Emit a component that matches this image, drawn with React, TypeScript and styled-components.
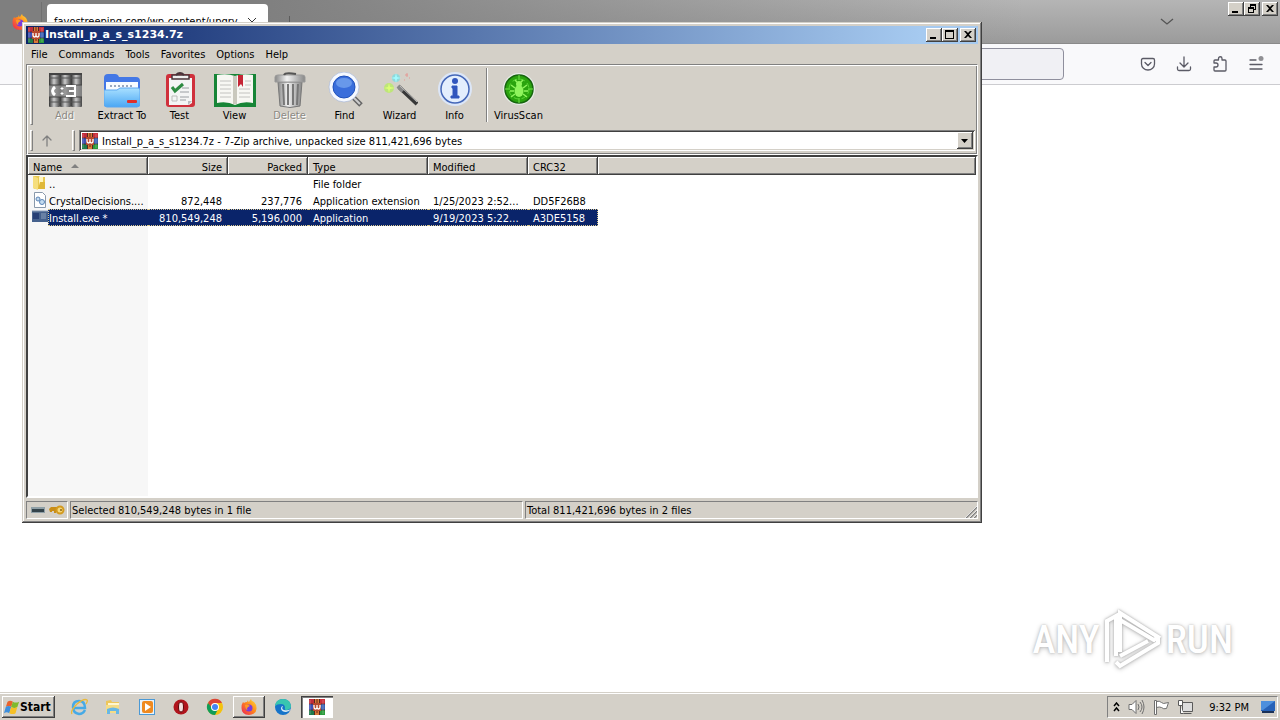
import React from "react";
import styled, { createGlobalStyle, css } from "styled-components";

const FACE = "#d4d0c8";
const SHADOW = "#808080";
const DARK = "#404040";
const NAVY = "#0a246a";

const Global = createGlobalStyle`
  * { box-sizing: border-box; }
  body { margin: 0; background: #fff; color: #000; font: 11px/14px "DejaVu Sans Condensed", "DejaVu Sans", sans-serif; }
  button, input, select { font: inherit; color: inherit; margin: 0; padding: 0; }
`;

const raised = css`
  box-shadow: inset -1px -1px ${DARK}, inset 1px 1px #fff, inset -2px -2px ${SHADOW};
`;

const Desktop = styled.div`
  position: relative;
  display: flex;
  flex-direction: column;
  min-height: 100vh;
`;

/* Browser */
const TabStrip = styled.header`
  display: flex;
  align-items: flex-start;
  height: 44px;
  padding: 2px 2px 0 12px;
  border-bottom: 1px solid #8a8a8a;
  background: linear-gradient(to right, #7f7f7f 20%, #7f7f7f00 80%), linear-gradient(#b5b5b5, #9b9b9b);
`;
const BrowserMark = styled.div`
  width: 30px;
  padding-top: 12px;
  height: 42px;
  border-right: 1px solid #707070;
`;
const BrowserTab = styled.div`
  display: flex;
  justify-content: space-between;
  align-items: center;
  width: 221px;
  height: 36px;
  margin: 2px 0 0 5px;
  padding: 0 10px 0 7px;
  border-radius: 4px;
  background: #fff;
`;
const TabClose = styled.button`
  display: flex;
  border: 0;
  background: none;
`;
const TabDivider = styled.span`
  width: 1px;
  height: 16px;
  margin: 14px 0 0 21px;
  background: #5c5c5c;
`;
const AllTabs = styled.button`
  display: flex;
  margin: 13px 54px 0 auto;
  border: 0;
  background: none;
`;
const NavBar = styled.nav`
  display: flex;
  align-items: center;
  height: 41px;
  padding: 0 6px 0 12px;
  border-bottom: 1px solid #ccccd0;
  background: #f9f9fb;
`;
const NavButton = styled.button`
  display: flex;
  align-items: center;
  justify-content: center;
  width: 36px;
  height: 32px;
  border: 0;
  background: none;
`;
const UrlBox = styled.input`
  flex: 1;
  min-width: 0;
  height: 32px;
  margin: 0 66px 0 110px;
  border: 1px solid #8f8f9d;
  border-radius: 4px;
  background: #f0f0f4;
`;
const PageArea = styled.main`
  position: relative;
  flex: 1;
  background: #fff;
`;

/* Window controls */
const Controls = styled.div`
  display: flex;
`;
const Control = styled.button<{ $apart?: boolean }>`
  display: flex;
  width: 16px;
  height: 14px;
  margin-left: ${(p) => (p.$apart ? "2px" : "0")};
  border: 0;
  background: ${FACE};
  ${raised}
`;

/* Archive window */
const Window = styled.section`
  position: absolute;
  top: 22px;
  left: 22px;
  width: 75%;
  padding: 4px;
  background: ${FACE};
  box-shadow: inset -1px -1px ${DARK}, inset 1px 1px ${FACE}, inset -2px -2px ${SHADOW}, inset 2px 2px #fff;
`;
const TitleBar = styled.div`
  display: flex;
  align-items: center;
  height: 18px;
  padding: 0 2px;
  color: #fff;
  background: linear-gradient(to right, ${NAVY}, #a6caf0 94%);
`;
const Title = styled.h1`
  flex: 1;
  margin: 0 0 0 1px;
  font: bold 11px/14px "DejaVu Sans", sans-serif;
`;
const MenuBar = styled.div`
  display: flex;
  gap: 11px;
  height: 20px;
  padding: 1px 0 0 5px;
`;
const MenuItem = styled.button`
  border: 0;
  background: none;
  white-space: nowrap;
`;
const Bands = styled.div`
  border: 1px solid ${SHADOW};
  border-bottom-color: #fff;
  border-right-color: #fff;
  box-shadow: inset 1px 1px #fff, inset -1px -1px ${SHADOW};
  padding: 1px;
`;
const Toolbar = styled.div`
  display: flex;
  align-items: flex-start;
  height: 61px;
  padding: 2px;
`;
const Grip = styled.span`
  flex: none;
  width: 3px;
  align-self: stretch;
  border: 1px solid #fff;
  border-right-color: ${SHADOW};
  border-bottom-color: ${SHADOW};
`;
const ToolList = styled.div`
  display: flex;
  padding-left: 4px;
`;
const Tool = styled.button<{ $wide?: boolean }>`
  display: flex;
  flex-direction: column;
  align-items: center;
  width: ${(p) => (p.$wide ? "60px" : "55px")};
  padding: 4px 0 0;
  border: 0;
  background: none;
  line-height: 14px;
  white-space: nowrap;
  &:disabled { color: #8c8a84; text-shadow: 1px 1px #fff; }
  svg { flex: none; margin-bottom: 1px; }
`;
const ToolDivider = styled.span`
  width: 2px;
  height: 54px;
  margin: 0 3px 0 4px;
  border-left: 1px solid ${SHADOW};
  border-right: 1px solid #fff;
`;
const AddressBar = styled.div`
  display: flex;
  align-items: center;
  height: 26px;
  padding: 3px 1px 2px 2px;
`;
const UpButton = styled.button`
  display: flex;
  width: 39px;
  padding-left: 6px;
  border: 0;
  background: none;
`;
const Combo = styled.label`
  display: flex;
  align-items: center;
  flex: 1;
  height: 21px;
  margin-left: 4px;
  padding: 2px 2px 2px 3px;
  background: #fff;
  box-shadow: inset 1px 1px ${SHADOW}, inset -1px -1px #fff, inset 2px 2px ${DARK}, inset -2px -2px ${FACE};
`;
const ComboSelect = styled.select`
  flex: 1;
  min-width: 0;
  height: 17px;
  margin-left: 4px;
  padding-top: 2px;
  border: 0;
  outline: 0;
  appearance: none;
  background: none;
`;
const ComboArrow = styled.span`
  display: flex;
  align-items: center;
  justify-content: center;
  width: 16px;
  height: 17px;
  background: ${FACE};
  ${raised}
`;
const FileList = styled.div`
  min-height: 343px;
  border: 2px solid #fff;
  border-top-color: ${DARK};
  border-left-color: ${DARK};
  background: linear-gradient(to right, #f7f7f7 120px, #fff 120px);
`;
const FileTable = styled.table`
  width: 100%;
  table-layout: fixed;
  border-collapse: separate;
  border-spacing: 0;
`;
const Col = styled.col<{ $w?: number }>`
  width: ${(p) => (p.$w ? `${p.$w}px` : "auto")};
`;
const Head = styled.th<{ $right?: boolean }>`
  height: 18px;
  padding: 3px 6px 0 5px;
  font-weight: normal;
  text-align: ${(p) => (p.$right ? "right" : "left")};
  background: ${FACE};
  ${raised}
`;
const SortMark = styled.span`
  display: inline-block;
  margin: 0 0 3px 9px;
  border: 4px solid transparent;
  border-top: 0;
  border-bottom-color: ${SHADOW};
`;
const Cell = styled.td<{ $right?: boolean }>`
  height: 17px;
  padding: 3px 6px 0 5px;
  overflow: hidden;
  line-height: 13px;
  text-align: ${(p) => (p.$right ? "right" : "left")};
  text-overflow: ellipsis;
  vertical-align: top;
  white-space: nowrap;
`;
const NameCell = styled(Cell)`
  padding: 0 0 0 4px;
`;
const NameLine = styled.div`
  display: flex;
  height: 17px;
`;
const NameText = styled.span`
  flex: 1;
  padding: 3px 0 0 1px;
`;
const Row = styled.tr<{ $selected?: boolean }>`
  ${(p) =>
    p.$selected &&
    css`
      color: #fff;
      ${Cell}:not(:first-child), ${NameText} {
        padding-top: 2px;
        background: ${NAVY};
        border-top: 1px dotted #d8c890;
        border-bottom: 1px dotted #d8c890;
      }
      ${NameText} { border-left: 1px dotted #d8c890; padding-left: 0; }
      ${Cell}:nth-child(6) { border-right: 1px dotted #d8c890; }
      ${Cell}:nth-child(7) { background: none; border: 0; }
    `}
`;
const StatusBar = styled.footer`
  display: flex;
  gap: 2px;
  padding-top: 3px;
`;
const StatusPanel = styled.div<{ $icons?: boolean }>`
  display: flex;
  align-items: center;
  gap: 3px;
  flex: ${(p) => (p.$icons ? "none" : "1")};
  width: ${(p) => (p.$icons ? "42px" : "auto")};
  height: 18px;
  padding: ${(p) => (p.$icons ? "0 0 0 3px" : "2px 0 0 1px")};
  border: 1px solid ${SHADOW};
  border-right-color: #fff;
  border-bottom-color: #fff;
`;
const SizeGrip = styled.svg`
  margin: 2px 0 0 auto;
`;

/* Watermark */
const Watermark = styled.div`
  position: absolute;
  right: 47px;
  bottom: 20px;
  display: flex;
  align-items: center;
  gap: 4px;
  color: #fff;
  font: 500 39px/64px "Roboto Condensed", "Liberation Sans Narrow", "Liberation Sans", sans-serif;
  text-shadow: 0 0 2px #bbb, 0 1px 5px #bbb;
  svg { filter: drop-shadow(0 0 1px #aaa) drop-shadow(0 1px 2px #ccc); }
`;

/* Taskbar */
const Taskbar = styled.footer`
  display: flex;
  align-items: center;
  height: 28px;
  padding: 1px 2px 0;
  border-top: 1px solid ${FACE};
  background: ${FACE};
  box-shadow: inset 0 1px #fff;
`;
const StartButton = styled.button`
  display: flex;
  align-items: center;
  width: 53px;
  height: 22px;
  padding: 0 2px;
  border: 0;
  background: ${FACE};
  font-size: 12px;
  font-weight: bold;
  ${raised}
`;
const TaskList = styled.div`
  display: flex;
  gap: 2px;
  margin-left: 8px;
`;
const TaskButton = styled.button<{ $state?: "open" | "active" }>`
  display: flex;
  align-items: center;
  justify-content: center;
  width: 32px;
  height: 22px;
  border: 0;
  background: ${(p) => (p.$state === "active" ? "#fff" : "none")};
  ${(p) => p.$state === "open" && raised}
  ${(p) => p.$state === "active" && css`box-shadow: inset 1px 1px ${DARK}, inset 2px 2px ${SHADOW}, inset -1px -1px #fff;`}
`;
const Tray = styled.div`
  display: flex;
  align-items: center;
  gap: 8px;
  height: 22px;
  margin-left: auto;
  padding: 0 1px 0 5px;
  border: 1px solid ${SHADOW};
  border-right-color: #fff;
  border-bottom-color: #fff;
`;
const Clock = styled.time`
  margin: 0 3px 0 8px;
  padding-top: 2px;
  white-space: nowrap;
`;

function WinRar({ size = 16 }: { size?: number }) {
  return (
    <svg width={size} height={size} viewBox="0 0 16 16" aria-hidden="true">
      <rect width="16" height="16" fill="#53281f" />
      <path d="M0 0h5v5H0z" fill="#c02c3c" />
      <path d="M0 5h5v6H0z" fill="#3f4fb4" />
      <path d="M0 11h5v5H0z" fill="#1f7a4c" />
      <path d="M11 0h5v5h-5z" fill="#c9303c" />
      <path d="M11 5h5v6h-5z" fill="#3b62b4" />
      <path d="M11 11h5v5h-5z" fill="#2c9b3c" />
      <path d="M0 5h16M0 11h16" stroke="#3a1c1c" strokeOpacity=".6" />
      <path d="M1 1v14M14 1v14" stroke="#fff" strokeOpacity=".25" />
      <path d="M6 0h4v16H6z" fill="#d87a3a" />
      <path d="M4 4h8v8H4z" fill="#b8492e" />
      <path d="M5 6v2q0 2 1.500 2T8 8V6M8 8q0 2 1.500 2T11 8V6" fill="none" stroke="#fff" strokeWidth="1.300" />
      <path d="M7 1h2M7 3h2M7 13h2" stroke="#6b2415" />
    </svg>
  );
}

function AddIcon() {
  return (
    <svg width="36" height="36" viewBox="0 0 36 36" aria-hidden="true">
      <defs>
        <linearGradient id="spine"><stop stopColor="#333" /><stop offset=".45" stopColor="#ccc" /><stop offset="1" stopColor="#444" /></linearGradient>
      </defs>
      {[2, 13, 24].map((x) => (
        <g key={x}>
          <rect x={x} y="1" width="11" height="34" rx="1" fill="url(#spine)" />
          <path d={`M${x} 6h11M${x} 30h11`} stroke="#555" />
          <path d={`M${x} 2h11`} stroke="#444" strokeWidth="2" />
        </g>
      ))}
      <rect x="2" y="13" width="33" height="12" fill="#8c8c8c" opacity=".8" />
      <path d="M2 13h33M2 25h33" stroke="#444" />
      <path d="M8 15q-5 4 0 8" fill="none" stroke="#fff" strokeWidth="3" />
      <path d="M19 14h9v10h-9M22 19h6" fill="none" stroke="#fff" strokeWidth="2" />
      <path d="M14 16h2v1h-2zM14 21h2v1h-2z" fill="#fff" stroke="#fff" />
    </svg>
  );
}

function ExtractIcon() {
  return (
    <svg width="36" height="36" viewBox="0 0 36 36" aria-hidden="true">
      <defs>
        <linearGradient id="folder" x2="0" y2="1"><stop stopColor="#a9e0ff" /><stop offset="1" stopColor="#4ba7f4" /></linearGradient>
      </defs>
      <path d="M0 6q0-4 4-4h7q3 0 4 3h17q4 0 4 4v22H0z" fill="#4478e6" />
      <path d="M2 10h32v9H2z" fill="#f8fbff" />
      <path d="M6 14h24" stroke="#9aa8be" strokeWidth="2" strokeDasharray="2 2" />
      <path d="M0 18h13l3-2h18q2 0 2 2v14q0 3-3 3H3q-3 0-3-3z" fill="url(#folder)" stroke="#5da7f0" />
      <rect x="23" y="28" width="10" height="3" rx="1" fill="#e0302a" />
    </svg>
  );
}

function TestIcon() {
  return (
    <svg width="36" height="36" viewBox="0 0 36 36" aria-hidden="true">
      <rect x="4" y="2" width="29" height="33" rx="3" fill="#d0303c" />
      <path d="M7 6h23v25l-3 2H7z" fill="#f4f5f5" />
      <path d="M26 33v-4h4z" fill="#b9bcc0" />
      <path d="M10 3h17v4H10z" fill="#eee" stroke="#49343a" strokeWidth="1.500" />
      <path d="M14 3q4-4 8 0" fill="none" stroke="#49343a" strokeWidth="2" />
      <path d="M10 15l3 4 8-7" fill="none" stroke="#2d8b42" strokeWidth="3" />
      <path d="M20 16h7M18 20h9M18 25h9M18 28h6" stroke="#9a9ea2" />
      <path d="M10 24h5v5h-5z" fill="none" stroke="#bbb" />
    </svg>
  );
}

function ViewIcon() {
  return (
    <svg width="42" height="36" viewBox="0 0 42 36" aria-hidden="true">
      <path d="M0 2h42v33H0z" fill="#178537" />
      <path d="M3 3q10-2 18 1 8-3 18-1v28q-10-2-18 2-8-4-18-2z" fill="#f7f7f3" />
      <path d="M19 4h4v28h-4z" fill="#c9c8bd" />
      <path d="M6 9h11M6 13h11M6 17h11M6 21h11M6 25h11M25 17h11M25 21h11M25 25h11M31 13h6M31 9h6" stroke="#c2c2bf" />
      <path d="M24 3h5v12l-2-3-3 3z" fill="#c52535" />
    </svg>
  );
}

function DeleteIcon() {
  return (
    <svg width="36" height="36" viewBox="0 0 36 36" aria-hidden="true">
      <defs>
        <linearGradient id="can"><stop stopColor="#888" /><stop offset=".4" stopColor="#f2f2f2" /><stop offset="1" stopColor="#888" /></linearGradient>
      </defs>
      <path d="M6 10h24l-2 24q-10 3-20 0z" fill="url(#can)" stroke="#777" />
      <path d="M11 12l1 21M16 12v21M21 12v21M26 12l-1 21" stroke="#777" strokeWidth="2" />
      <path d="M3 5q0-2 3-2h24q3 0 3 2v5H3z" fill="url(#can)" stroke="#999" />
      <path d="M12 3q1-3 12-1" fill="none" stroke="#555" strokeWidth="2" />
    </svg>
  );
}

function FindIcon() {
  return (
    <svg width="36" height="36" viewBox="0 0 36 36" aria-hidden="true">
      <path d="M26 25l8 8" stroke="#666" strokeWidth="5" />
      <path d="M25 24l8 8" stroke="#ccc" strokeWidth="2" />
      <circle cx="17" cy="15" r="13" fill="#3a6edb" stroke="#f6f9ff" strokeWidth="4" />
      <circle cx="17" cy="15" r="11" fill="none" stroke="#1f51bb" />
      <circle cx="17" cy="15" r="15" fill="none" stroke="#a8b8d8" strokeWidth=".7" />
      <ellipse cx="17" cy="11" rx="8" ry="5" fill="#7ca9f1" opacity=".7" />
    </svg>
  );
}

function WizardIcon() {
  return (
    <svg width="36" height="36" viewBox="0 0 36 36" aria-hidden="true">
      <path d="M17 15l18 17" stroke="#383838" strokeWidth="4" />
      <path d="M16 14l5 5" stroke="#888" strokeWidth="4" />
      <path d="M18 14l17 16" stroke="#bbb" />
      <circle cx="14" cy="6" r="4" fill="#74dde2" opacity=".7" />
      <path d="M14 1l1 4 4 1-4 1-1 4-1-4-4-1 4-1z" fill="#a2fbff" />
      <circle cx="7" cy="16" r="5" fill="#b7ec60" opacity=".75" />
      <path d="M7 11l1 4 5 1-5 1-1 4-1-4-4-1 4-1z" fill="#dcff75" />
      <path d="M23 3h3M25 1v4M22 8h1M27 6h1" stroke="#e59995" />
    </svg>
  );
}

function InfoIcon() {
  return (
    <svg width="36" height="36" viewBox="0 0 36 36" aria-hidden="true">
      <circle cx="18" cy="17" r="17" fill="#dce6f7" />
      <circle cx="18" cy="17" r="14" fill="#e3eefd" stroke="#4467b8" strokeWidth="1.500" />
      <circle cx="18" cy="9" r="3" fill="#3156bd" />
      <path d="M15 14h5v10h2v2h-8v-2h2v-8h-1z" fill="#3156bd" stroke="#3156bd" />
    </svg>
  );
}

function VirusIcon() {
  return (
    <svg width="36" height="36" viewBox="0 0 36 36" aria-hidden="true">
      <circle cx="18" cy="17" r="15" fill="#2aa40e" stroke="#e8ece8" strokeWidth="2" />
      <circle cx="18" cy="17" r="14" fill="none" stroke="#17660e" strokeWidth="1.500" />
      <circle cx="18" cy="17" r="10" fill="none" stroke="#5bd638" strokeDasharray="5 3" />
      <path d="M18 3v5M18 26v5M4 17h5M27 17h5" stroke="#74e34e" />
      <ellipse cx="18" cy="19" rx="4.500" ry="6" fill="#8ff45d" />
      <circle cx="18" cy="12" r="3" fill="#8ff45d" />
      <path d="M14 16l-4-3M22 16l4-3M13 19H9M23 19h4M14 22l-4 3M22 22l4 3M16 10l-2-2M20 10l2-2" stroke="#8ff45d" strokeWidth="1.500" />
    </svg>
  );
}

function FirefoxIcon() {
  return (
    <svg width="16" height="16" viewBox="0 0 16 16" aria-hidden="true">
      <defs>
        <linearGradient id="fox" x1="1" x2="0" y2="1"><stop stopColor="#ffe23c" /><stop offset=".45" stopColor="#ff8a1c" /><stop offset="1" stopColor="#ed1f58" /></linearGradient>
      </defs>
      <path d="M2 3l1 1q1-1 3-1l1-2q0 2 1 2 1-2 2-3 0 2 3 3 3 3 2.500 7-.5 5.500-7.500 6Q.5 15.500.500 9 .500 5 2 3z" fill="url(#fox)" />
      <circle cx="8" cy="9" r="3.500" fill="#7b3bdc" />
      <path d="M4 6q3-1 5 1l-2 1q-2 2 0 3-3 0-3-5z" fill="#ff9a22" />
    </svg>
  );
}

const WindowsFlag = () => (
  <svg width="16" height="16" viewBox="0 0 18 16" aria-hidden="true">
    <path d="M4 2q3-2 6 0L8 8Q5 6 2 8z" fill="#e8622c" />
    <path d="M10 2q3 2 7 0l-2 6q-3 2-7 0z" fill="#7fba2d" />
    <path d="M2 8q3-2 6 0l-2 7q-3-2-6 0z" fill="#3d8fdd" />
    <path d="M8 8q3 2 7 0l-2 7q-3 2-7 0z" fill="#f6c026" />
  </svg>
);
const IeIcon = () => (
  <svg width="18" height="18" viewBox="0 0 18 18" aria-hidden="true">
    <path d="M15 12q-2 4-6 4-6-1-6-7t6-6q6 0 6 7H4" fill="none" stroke="#46aae6" strokeWidth="2.500" />
    <path d="M2 16Q0 13 7 6q7-6 10-4 1 1-1 4" fill="none" stroke="#e9b93a" strokeWidth="1.300" />
  </svg>
);
const ExplorerIcon = () => (
  <svg width="18" height="18" viewBox="0 0 18 18" aria-hidden="true">
    <path d="M2 3l5-1 1 2h7v11H2z" fill="#edc65b" />
    <path d="M4 5h11v4H4z" fill="#fff6cf" />
    <path d="M2 7h13v8H2z" fill="#f5dc86" />
    <path d="M3 16v-5q6-3 12 0v5h-3v-3H6v3z" fill="#68b7e5" />
  </svg>
);
const PlayerIcon = () => (
  <svg width="18" height="18" viewBox="0 0 18 18" aria-hidden="true">
    <rect x="1.500" y="1.500" width="15" height="15" fill="#e9f3fb" stroke="#4b99d5" />
    <rect x="4" y="3" width="11" height="12" rx="2" fill="#ef8a20" />
    <path d="M7 5l6 4-6 4z" fill="#fff" />
  </svg>
);
const OperaIcon = () => (
  <svg width="18" height="18" viewBox="0 0 18 18" aria-hidden="true">
    <circle cx="9" cy="9" r="7.500" fill="#b0141c" />
    <ellipse cx="9" cy="9" rx="2.500" ry="5" fill="#f3dede" stroke="#5d060a" />
  </svg>
);
const ChromeIcon = () => (
  <svg width="18" height="18" viewBox="0 0 18 18" aria-hidden="true">
    <circle cx="9" cy="9" r="8" fill="#f4c20d" />
    <path d="M2 5a8 8 0 0114 0H9L6 11z" fill="#db4437" />
    <path d="M2 5a8 8 0 007 12l3-6-6-1z" fill="#0f9d58" />
    <circle cx="9" cy="9" r="4" fill="#fff" />
    <circle cx="9" cy="9" r="3" fill="#4285f4" />
  </svg>
);
const EdgeIcon = () => (
  <svg width="18" height="18" viewBox="0 0 18 18" aria-hidden="true">
    <circle cx="9" cy="9" r="8" fill="#1573c9" />
    <path d="M1 8q1-7 8-7t8 7q0 3-4 4-3 0-2-2 0-4-4-4-4 0-6 2z" fill="#38c6b0" />
    <path d="M9 8q-2 3 1 4 4 1 7-1-2 3-5 3-4 0-5-3 0-3 2-3z" fill="#dcecf5" />
  </svg>
);

const FolderIcon = () => (
  <svg width="16" height="16" viewBox="0 0 16 16" aria-hidden="true">
    <path d="M1 1h6l1 1h5v12H3l-2-1z" fill="#e9c94f" />
    <path d="M7 2h4v11H7z" fill="#fff5bd" />
    <path d="M1 1l5 2v12l-5-2z" fill="#f5de7d" />
    <path d="M8 7h5v7H6z" fill="#dfb839" />
  </svg>
);
const DllIcon = () => (
  <svg width="16" height="16" viewBox="0 0 16 16" aria-hidden="true">
    <path d="M2.500.500h8l3 3v12h-11z" fill="#fff" stroke="#8999ab" />
    <circle cx="6" cy="7" r="2" fill="#c4dcf0" stroke="#5a84b5" />
    <circle cx="10" cy="10" r="2.500" fill="#c4dcf0" stroke="#5a84b5" />
  </svg>
);
const ExeIcon = () => (
  <svg width="16" height="16" viewBox="0 0 16 16" aria-hidden="true">
    <path d="M0 2h16v11H0z" fill="#45618d" />
    <path d="M1 4h6v6H1z" fill="#263f75" />
    <path d="M9 4h5v6H9z" fill="#6881a5" />
    <path d="M0 2h16" stroke="#8da1bd" />
  </svg>
);

function ControlGlyph({ kind }: { kind: "min" | "max" | "restore" | "close" }) {
  const d = {
    min: "M4 9h6v2H4z",
    max: "M3 2h9v9H3zM4 4v6h7V4z",
    restore: "M6 2h6v6h-2V7h1V4H7v1H6zM4 5h6v6H4zM5 7v3h4V7z",
    close: "M4 3h2l2 2 2-2h2L9 6.500 12 10h-2L8 8l-2 2H4l3-3.500z",
  }[kind];
  return (
    <svg width="16" height="14" viewBox="0 0 16 14" aria-hidden="true">
      <path d={d} fillRule="evenodd" />
    </svg>
  );
}

function WindowControls({ maximized }: { maximized?: boolean }) {
  return (
    <Controls>
      <Control aria-label="Minimize"><ControlGlyph kind="min" /></Control>
      <Control aria-label={maximized ? "Restore" : "Maximize"}><ControlGlyph kind={maximized ? "restore" : "max"} /></Control>
      <Control aria-label="Close" $apart><ControlGlyph kind="close" /></Control>
    </Controls>
  );
}

function LineIcon({ d, color = "#5b5b66", children }: { d: string; color?: string; children?: React.ReactNode }) {
  return (
    <svg width="16" height="16" viewBox="0 0 16 16" fill="none" stroke={color} strokeWidth="1.300" strokeLinecap="round" strokeLinejoin="round" aria-hidden="true">
      <path d={d} />
      {children}
    </svg>
  );
}

const menus = ["File", "Commands", "Tools", "Favorites", "Options", "Help"];

const tools = [
  { label: "Add", icon: <AddIcon />, disabled: true },
  { label: "Extract To", icon: <ExtractIcon />, wide: true },
  { label: "Test", icon: <TestIcon /> },
  { label: "View", icon: <ViewIcon /> },
  { label: "Delete", icon: <DeleteIcon />, disabled: true },
  { label: "Find", icon: <FindIcon /> },
  { label: "Wizard", icon: <WizardIcon /> },
  { label: "Info", icon: <InfoIcon /> },
];

const files = [
  { name: "..", size: "", packed: "", type: "File folder", modified: "", crc: "", icon: <FolderIcon /> },
  { name: "CrystalDecisions....", size: "872,448", packed: "237,776", type: "Application extension", modified: "1/25/2023 2:52...", crc: "DD5F26B8", icon: <DllIcon /> },
  { name: "Install.exe *", size: "810,549,248", packed: "5,196,000", type: "Application", modified: "9/19/2023 5:22...", crc: "A3DE5158", icon: <ExeIcon />, selected: true },
];

function ArchiveWindow() {
  return (
    <Window aria-label="Archive">
      <TitleBar>
        <WinRar />
        <Title>Install_p_a_s_s1234.7z</Title>
        <WindowControls />
      </TitleBar>
      <MenuBar>
        {menus.map((m) => <MenuItem key={m}>{m}</MenuItem>)}
      </MenuBar>
      <Bands>
        <Toolbar>
          <Grip />
          <ToolList>
            {tools.map((t) => (
              <Tool key={t.label} $wide={t.wide} disabled={t.disabled}>{t.icon}{t.label}</Tool>
            ))}
            <ToolDivider />
            <Tool><VirusIcon />VirusScan</Tool>
          </ToolList>
        </Toolbar>
        <AddressBar>
          <Grip />
          <UpButton aria-label="Up one level">
            <LineIcon color="#808080" d="M8 13V3M4 7l4-4 4 4" />
          </UpButton>
          <Grip />
          <Combo>
            <WinRar />
            <ComboSelect aria-label="Archive path">
              <option>Install_p_a_s_s1234.7z - 7-Zip archive, unpacked size 811,421,696 bytes</option>
            </ComboSelect>
            <ComboArrow>
              <svg width="8" height="4" viewBox="0 0 8 4" aria-hidden="true"><path d="M0 0h7L3.500 4z" /></svg>
            </ComboArrow>
          </Combo>
        </AddressBar>
      </Bands>
      <FileList>
        <FileTable>
          <colgroup>
            <Col $w={120} /><Col $w={80} /><Col $w={80} /><Col $w={120} /><Col $w={100} /><Col $w={70} /><Col />
          </colgroup>
          <thead>
            <tr>
              <Head>Name<SortMark /></Head>
              <Head $right>Size</Head>
              <Head $right>Packed</Head>
              <Head>Type</Head>
              <Head>Modified</Head>
              <Head>CRC32</Head>
              <Head />
            </tr>
          </thead>
          <tbody>
            {files.map((f) => (
              <Row key={f.name} $selected={f.selected}>
                <NameCell><NameLine>{f.icon}<NameText>{f.name}</NameText></NameLine></NameCell>
                <Cell $right>{f.size}</Cell>
                <Cell $right>{f.packed}</Cell>
                <Cell>{f.type}</Cell>
                <Cell>{f.modified}</Cell>
                <Cell>{f.crc}</Cell>
                <Cell />
              </Row>
            ))}
          </tbody>
        </FileTable>
      </FileList>
      <StatusBar>
        <StatusPanel $icons>
          <svg width="16" height="14" viewBox="0 0 16 14" aria-hidden="true">
            <path d="M1 4h14v6H1z" fill="#8f9fa6" /><path d="M2 6h12v3H2z" fill="#34434a" />
          </svg>
          <svg width="16" height="14" viewBox="0 0 16 14" aria-hidden="true">
            <path d="M0 6l2-2h6v4H7v2H5V8H3v1H1z" fill="#c98d17" />
            <circle cx="11" cy="7" r="3.500" fill="#f5d77a" stroke="#d39a1e" strokeWidth="2" />
            <circle cx="12" cy="7" r="1" fill="#8c6410" />
          </svg>
        </StatusPanel>
        <StatusPanel>Selected 810,549,248 bytes in 1 file</StatusPanel>
        <StatusPanel>
          Total 811,421,696 bytes in 2 files
          <SizeGrip width="12" height="12" viewBox="0 0 12 12" aria-hidden="true">
            <path d="M1 12L12 1M5 12l7-7M9 12l3-3" stroke="#808080" strokeWidth="1.500" />
            <path d="M0 12L12 0M4 12l8-8M8 12l4-4" stroke="#fff" strokeWidth=".7" />
          </SizeGrip>
        </StatusPanel>
      </StatusBar>
    </Window>
  );
}

const tasks: { label: string; icon: React.ReactNode; state?: "open" | "active" }[] = [
  { label: "Internet Explorer", icon: <IeIcon /> },
  { label: "Explorer", icon: <ExplorerIcon /> },
  { label: "Media Player", icon: <PlayerIcon /> },
  { label: "Opera", icon: <OperaIcon /> },
  { label: "Chrome", icon: <ChromeIcon /> },
  { label: "Firefox", icon: <FirefoxIcon />, state: "open" },
  { label: "Edge", icon: <EdgeIcon /> },
  { label: "WinRAR", icon: <WinRar />, state: "active" },
];

export default function App() {
  return (
    <Desktop>
      <Global />
      <TabStrip>
        <BrowserMark><FirefoxIcon /></BrowserMark>
        <BrowserTab>
          <span>favostreeping.com/wp-content/upgrv</span>
          <TabClose aria-label="Close tab">
            <svg width="12" height="12" viewBox="0 0 12 12" aria-hidden="true"><path d="M2 2l8 8M10 2l-8 8" stroke="#333" /></svg>
          </TabClose>
        </BrowserTab>
        <TabDivider />
        <AllTabs aria-label="List all tabs">
          <svg width="14" height="14" viewBox="0 0 14 14" aria-hidden="true"><path d="M1 4l6 5 6-5" fill="none" stroke="#555" strokeWidth="1.300" /></svg>
        </AllTabs>
        <WindowControls maximized />
      </TabStrip>
      <NavBar>
        <NavButton aria-label="Back"><LineIcon color="#aaa" d="M13 8H1M6 3L1 8l5 5" /></NavButton>
        <UrlBox aria-label="Address" />
        <NavButton aria-label="Save to Pocket">
          <LineIcon d="M3 2.500h10q1.500 0 1.500 1.500v4a6.500 6 0 01-13 0V4q0-1.500 1.500-1.500zM5 6.500l3 3 3-3" />
        </NavButton>
        <NavButton aria-label="Downloads"><LineIcon d="M8 1v9M4 7l4 4 4-4M1.500 11v2q0 1.500 1.500 1.500h10q1.500 0 1.500-1.500v-2" /></NavButton>
        <NavButton aria-label="Extensions">
          <LineIcon d="M3 15q-1 0-1-1v-3h2a1.800 1.800 0 000-4H2V5q0-1 1-1h3.500V2.500a1.700 1.700 0 013.500 0V4h3q1 0 1 1v9q0 1-1 1z" />
        </NavButton>
        <NavButton aria-label="Menu">
          <LineIcon d="M2 4h6M2 8.500h12M2 13h12"><circle cx="13" cy="2.500" r="2.500" fill="#909094" stroke="none" /></LineIcon>
        </NavButton>
      </NavBar>
      <PageArea>
        <Watermark>
          ANY
          <svg width="58" height="62" viewBox="0 0 58 62" fill="none" stroke="#fff" strokeWidth="4" aria-hidden="true">
            <path d="M3 53V12l9-5v40" />
            <path d="M16 43V4l38 24-4 3-34-20" />
            <path d="M12 53l4 4 38-23v-6M16 47l28-15" />
          </svg>
          RUN
        </Watermark>
      </PageArea>
      <ArchiveWindow />
      <Taskbar>
        <StartButton><WindowsFlag />Start</StartButton>
        <TaskList>
          {tasks.map((t) => (
            <TaskButton key={t.label} aria-label={t.label} $state={t.state}>{t.icon}</TaskButton>
          ))}
        </TaskList>
        <Tray>
          <svg width="7" height="10" viewBox="0 0 7 10" fill="none" stroke="#000" strokeWidth="1.500" aria-hidden="true"><path d="M1 4l2.500-3L6 4M1 9l2.500-3L6 9" /></svg>
          <svg width="17" height="16" viewBox="0 0 17 16" fill="none" stroke="#6f6f6f" aria-hidden="true">
            <path d="M1 5.500h3l4-4v13l-4-4H1z" fill="#fff" /><path d="M10 5q2 3 0 6M12 3q4 5 0 10M14 1q4 7 0 14" />
          </svg>
          <svg width="16" height="16" viewBox="0 0 16 16" fill="#fff" stroke="#6f6f6f" aria-hidden="true">
            <path d="M1.500 1.500h2v14h-2zM3.500 2.500q3-1 5 1l2 1 5-1-2 6q-3 1-5-1-2-1-5 0z" />
          </svg>
          <svg width="16" height="16" viewBox="0 0 16 16" fill="#fff" stroke="#5a5a5a" aria-hidden="true">
            <path d="M5.500 3.500h10v9h-10z" fill="#ddd" /><path d="M6.500 14.500h8M1.500 1.500h4v5h-4zM3.500 6.500v8h3" />
          </svg>
          <Clock>9:32 PM</Clock>
          <svg width="16" height="16" viewBox="0 0 16 16" aria-hidden="true">
            <path d="M1 2h14v10H1z" fill="#2762b8" /><path d="M1 2h14L3 11H1z" fill="#4d8fdd" /><path d="M2 12h12v2H2z" fill="#1b3158" />
          </svg>
        </Tray>
      </Taskbar>
    </Desktop>
  );
}
